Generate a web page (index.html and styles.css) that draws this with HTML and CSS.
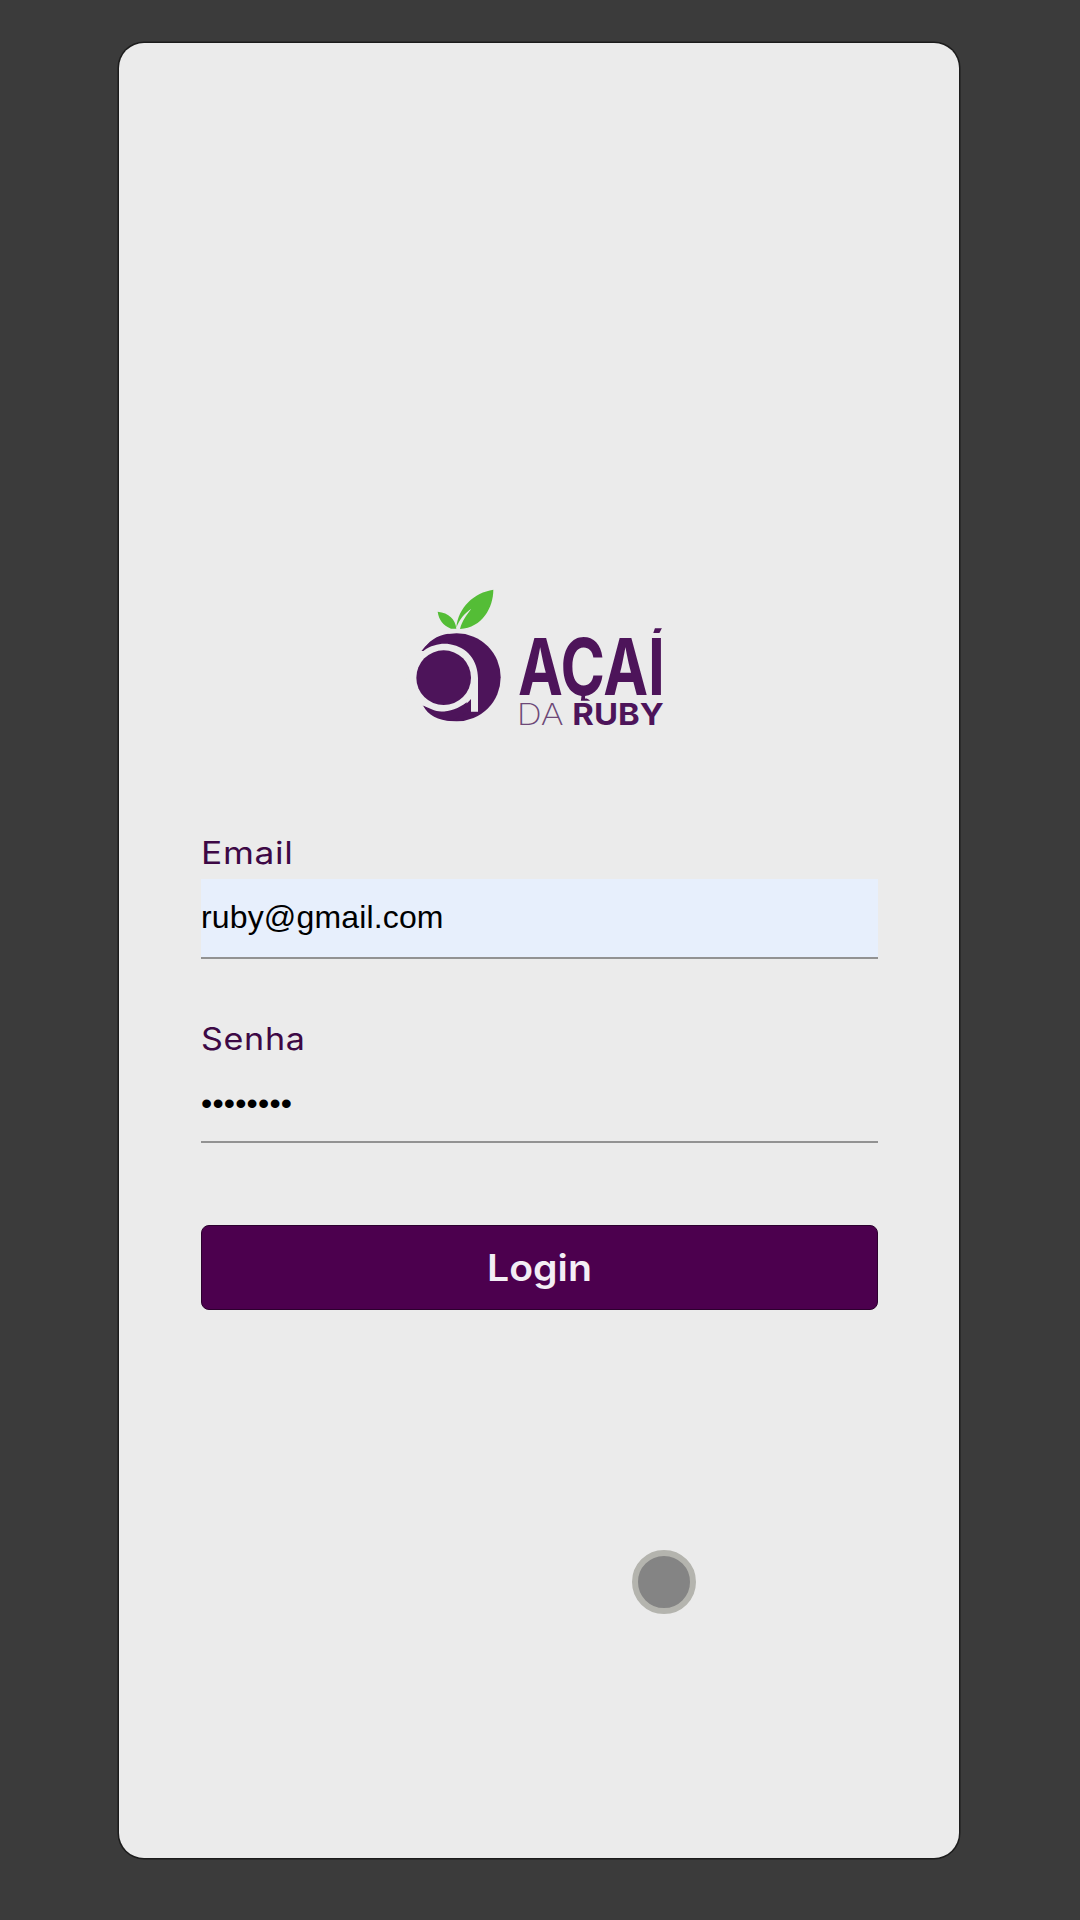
FILE: index.html
```html
<!DOCTYPE html>
<html lang="pt-BR">
<head>
<meta charset="utf-8">
<title>Açaí da Ruby</title>
<link rel="stylesheet" href="styles.css">
</head>
<body>
<main class="card">
  <svg class="logo" viewBox="0 0 840 495" role="img" aria-label="Açaí da Ruby">
    <defs><clipPath id="name-clip"><rect x="340" y="160" width="470" height="217"/></clipPath></defs>
    <circle class="ink" cx="170" cy="307" r="132"/>
    <path class="paper" d="M20 228H70C98 208 126 204 150 208C202 216 234 258 234 310V410H213V372C188 403 145 420 102 406L70 392L20 390Z"/>
    <path class="ink" d="M68 228C82 200 112 180 145 176L172 195C128 188 95 200 68 228ZM70 392C104 420 158 415 200 382L202 410L155 438C116 437 82 420 70 392Z"/>
    <circle class="ink" cx="131" cy="308" r="82"/>
    <path class="leaf" d="M113 110C147 114 166 132 169 161H153C128 150 117 135 113 110ZM169 158C175 96 222 53 280 44C280 97 247 158 180 162C186 137 201 119 214 101C194 114 178 133 169 158Z"/>
    <g clip-path="url(#name-clip)">
      <text class="logo-name" transform="translate(354 360) scale(.74 1)" textLength="596" lengthAdjust="spacingAndGlyphs">AÇAÍ</text>
    </g>
    <text class="logo-da" x="350" y="450" textLength="141" lengthAdjust="spacingAndGlyphs">DA</text>
    <text class="logo-ruby" x="517" y="450" textLength="274" lengthAdjust="spacingAndGlyphs">RUBY</text>
  </svg>
  <form class="form">
    <label class="label email" for="email">Email</label>
    <input class="input filled" id="email" type="text" value="ruby@gmail.com">
    <label class="label senha" for="senha">Senha</label>
    <input class="input dots" id="senha" type="password" value="12345678">
    <button class="button" type="button"><span class="button-text">Login</span></button>
  </form>
</main>
<span class="pointer"></span>
</body>
</html>
```
FILE: styles.css
```css
* { box-sizing: border-box; }
body {
  margin: 0;
  height: 1920px;
  padding: 43px 121px 62px 119px;
  background: #3b3b3b;
  font-family: Inter, sans-serif;
  overflow: hidden;
}
.card {
  height: 1815px;
  padding: 532px 82px 0;
  background: #ebebeb;
  border-radius: 25px;
  box-shadow: 0 0 0 1.5px #1c1c1c;
}
.logo {
  display: block;
  width: 280px;
  height: 165px;
  margin-left: 199px;
  overflow: visible;
}
.ink { fill: #4d145a; }
.paper { fill: #ebebeb; }
.leaf { fill: #54bd36; }
.logo-name { fill: #4d145a; font-size: 236px; font-weight: 700; }
.logo-da { fill: #6d4877; font-size: 91px; font-weight: 200; }
.logo-ruby { fill: #4d145a; font-size: 91px; font-weight: 700; }
.form {
  display: flex;
  flex-direction: column;
  padding-top: 94px;
}
.label {
  height: 45px;
  line-height: 38px;
  font-size: 31px;
  letter-spacing: .6px;
  color: #3d0845;
  transform-origin: left;
}
.email { transform: scaleX(1.14); }
.senha { margin-top: 61px; height: 43px; transform: scaleX(1.1); }
.input {
  width: 677px;
  height: 80px;
  padding: 0;
  border: 0;
  border-bottom: 2px solid #929292;
  border-radius: 0;
  outline: 0;
  background: transparent;
  font: 32px "Liberation Sans", sans-serif;
  color: #000;
}
.filled { padding-bottom: 2px; letter-spacing: .15px; background: #e7effc; }
.dots { letter-spacing: .2px; padding-top: 2px; }
.button {
  width: 677px;
  height: 85px;
  margin-top: 82px;
  padding: 0;
  border: 1px solid #2c002e;
  border-radius: 8px;
  background: #4c004e;
  color: #f3eef5;
  font: 600 37px Inter, sans-serif;
}
.button-text { display: inline-block; transform: scaleX(1.06); }
.pointer {
  position: absolute;
  left: 632px;
  top: 1550px;
  width: 64px;
  height: 64px;
  border: 6px solid #b4b4ae;
  border-radius: 50%;
  background: #848484;
}
```
